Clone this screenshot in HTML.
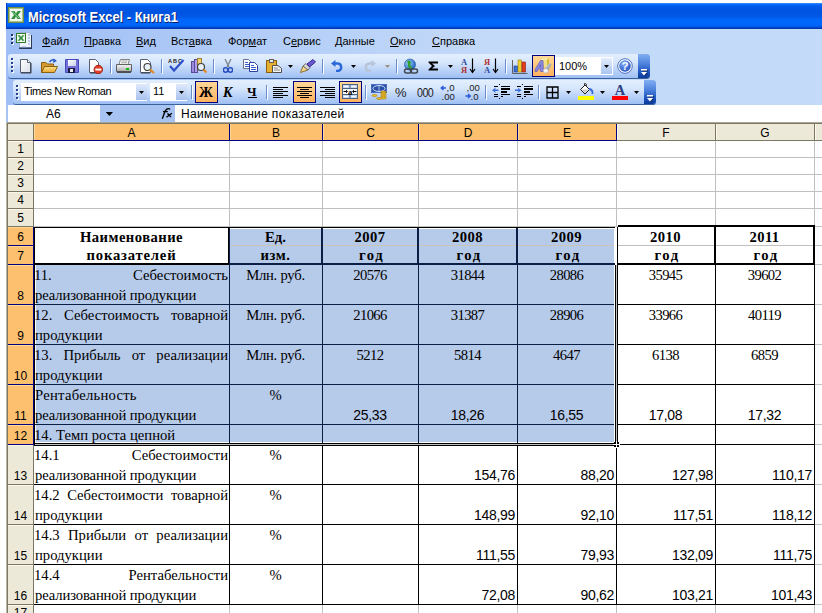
<!DOCTYPE html><html><head><meta charset="utf-8"><style>
html,body{margin:0;padding:0;width:822px;height:613px;overflow:hidden;background:#fff;position:relative}
.a{position:absolute}
.t{position:absolute;white-space:nowrap;line-height:1}
u{text-decoration:underline;text-underline-offset:1px}
.bl{display:inline-block;vertical-align:baseline}
</style></head><body>
<div class="a" style="left:6px;top:3px;width:816px;height:26px;background:linear-gradient(#4a94ff 0px,#1470ff 1px,#0062f2 2.5px,#0058e6 4px,#0054df 9px,#005ae8 14px,#0066fa 16px,#0068ff 22px,#005ae8 23.5px,#0046cc 24.5px,#0032a8 26px);"></div>
<div class="a" style="left:6px;top:3px;width:1px;height:26px;background:#0040c0;"></div>
<svg class="a" style="left:8px;top:7px" width="16" height="16" viewBox="0 0 16 16">
<rect x="0" y="0" width="16" height="16" fill="#6f8f3f"/>
<rect x="1" y="1" width="14" height="14" fill="#a8c488"/>
<rect x="2" y="2" width="12" height="12" fill="#f2f8ee"/>
<path d="M3 4 H6.5 L8 6.5 L9.5 4 H13 L10 8 L13 12 H9.5 L8 9.5 L6.5 12 H3 L6 8 Z" fill="#2f9040"/>
<path d="M4 4.5 L11.5 11.5" stroke="#a8e0a8" stroke-width="0.8"/>
</svg>
<div class="t" style="left:28px;top:9px;font:bold 14px 'Liberation Sans', sans-serif;color:#fff;text-shadow:1px 1px 0 #0a1e6e;transform-origin:0 0;transform:scaleX(0.92);">Microsoft Excel - Книга1</div>
<div class="a" style="left:6px;top:29px;width:816px;height:24px;background:linear-gradient(90deg,#9ebef5 0%,#c4daf9 60%,#c4daf9 100%);"></div>
<div class="a" style="left:12px;top:35px;width:2px;height:2px;background:#fff;"></div>
<div class="a" style="left:11px;top:34px;width:2px;height:2px;background:#1c3270;"></div>
<div class="a" style="left:12px;top:39px;width:2px;height:2px;background:#fff;"></div>
<div class="a" style="left:11px;top:38px;width:2px;height:2px;background:#1c3270;"></div>
<div class="a" style="left:12px;top:43px;width:2px;height:2px;background:#fff;"></div>
<div class="a" style="left:11px;top:42px;width:2px;height:2px;background:#1c3270;"></div>
<svg class="a" style="left:16px;top:32px" width="18" height="18" viewBox="0 0 18 18">
<path d="M3.5 0.5 H13 L15.5 3 V15.5 H3.5 Z" fill="#eef4ff" stroke="#9ab0d8"/>
<path d="M16 3 V17 H3 V15.5 H15 V3 Z" fill="#2a3a5a"/>
<path d="M12 3H14M12 6H14M12 9H14M12 12H14M6 15H10" stroke="#8aa0c8"/>
<rect x="0" y="1" width="10" height="10" fill="#2f7a20"/>
<rect x="1" y="2" width="8" height="8" fill="#f4faf0"/>
<path d="M1.5 3.2 H3.8 L5 5 L6.2 3.2 H8.5 L6.2 6 L8.5 8.8 H6.2 L5 7 L3.8 8.8 H1.5 L3.8 6 Z" fill="#2f9040"/>
</svg>
<div class="t" style="left:42px;top:35px;font:11px 'Liberation Sans', sans-serif;color:#000;"><u>Ф</u>айл</div>
<div class="t" style="left:84px;top:35px;font:11px 'Liberation Sans', sans-serif;color:#000;"><u>П</u>равка</div>
<div class="t" style="left:136px;top:35px;font:11px 'Liberation Sans', sans-serif;color:#000;"><u>В</u>ид</div>
<div class="t" style="left:171px;top:35px;font:11px 'Liberation Sans', sans-serif;color:#000;">Вст<u>а</u>вка</div>
<div class="t" style="left:228px;top:35px;font:11px 'Liberation Sans', sans-serif;color:#000;">Фор<u>м</u>ат</div>
<div class="t" style="left:283px;top:35px;font:11px 'Liberation Sans', sans-serif;color:#000;">С<u>е</u>рвис</div>
<div class="t" style="left:335px;top:35px;font:11px 'Liberation Sans', sans-serif;color:#000;"><u>Д</u>анные</div>
<div class="t" style="left:390px;top:35px;font:11px 'Liberation Sans', sans-serif;color:#000;"><u>О</u>кно</div>
<div class="t" style="left:432px;top:35px;font:11px 'Liberation Sans', sans-serif;color:#000;"><u>С</u>правка</div>
<div class="a" style="left:6px;top:53px;width:816px;height:52px;background:linear-gradient(90deg,#9ebef5 0%,#c4daf9 60%,#c4daf9 100%);"></div>
<div class="a" style="left:8px;top:54px;width:642px;height:24px;background:linear-gradient(#e3effe 0%,#d6e6fc 35%,#bcd4f8 65%,#9ebff4 100%);border-radius:3px;box-shadow:0 1px 0 #3b619c;"></div>
<div class="a" style="left:638px;top:54px;width:12px;height:24px;background:linear-gradient(#82aef0 0%,#4f83de 40%,#1f55c0 75%,#0a3a9a 100%);border-radius:0 3px 3px 0;"></div>
<svg class="a" style="left:641px;top:69px" width="8" height="8" viewBox="0 0 8 8"><rect x="1" y="1" width="6" height="1.5" fill="#000" opacity="0.45"/><path d="M1 4 H7 L4 7.5 Z" fill="#000" opacity="0.4"/><rect x="0" y="0" width="6" height="1.5" fill="#fff"/><path d="M0 3 H6 L3 6.5 Z" fill="#fff"/></svg>
<div class="a" style="left:12px;top:59px;width:2px;height:2px;background:#fff;"></div>
<div class="a" style="left:11px;top:58px;width:2px;height:2px;background:#27418f;"></div>
<div class="a" style="left:12px;top:63px;width:2px;height:2px;background:#fff;"></div>
<div class="a" style="left:11px;top:62px;width:2px;height:2px;background:#27418f;"></div>
<div class="a" style="left:12px;top:67px;width:2px;height:2px;background:#fff;"></div>
<div class="a" style="left:11px;top:66px;width:2px;height:2px;background:#27418f;"></div>
<div class="a" style="left:12px;top:71px;width:2px;height:2px;background:#fff;"></div>
<div class="a" style="left:11px;top:70px;width:2px;height:2px;background:#27418f;"></div>
<svg class="a" style="left:20px;top:59px;" width="12" height="15" viewBox="0 0 12 15"><defs><linearGradient id="gNew" x1="0" y1="0" x2="1" y2="1"><stop offset="0" stop-color="#fff"/><stop offset="1" stop-color="#d8dde8"/></linearGradient></defs><path d="M0.5 0.5H7.5L10.5 3.5V13.5H0.5Z" fill="url(#gNew)" stroke="#5a6070"/><path d="M7.5 0.5V3.5H10.5" fill="#fff" stroke="#5a6070"/><path d="M1 14H11V4" fill="none" stroke="#30384a"/></svg>
<svg class="a" style="left:41px;top:58px;" width="17" height="16" viewBox="0 0 17 16"><defs><linearGradient id="gFo" x1="0" y1="0" x2="0" y2="1"><stop offset="0" stop-color="#fbe08a"/><stop offset="1" stop-color="#e8a830"/></linearGradient></defs><path d="M0.5 4.5H5L6.5 6H12.5V14.5H0.5Z" fill="#d89a30" stroke="#8a6010"/><path d="M3.5 8.5H16.5L13.5 14.5H0.5Z" fill="url(#gFo)" stroke="#8a6010"/><path d="M8.5 4 Q11 0.5 14 2.5" fill="none" stroke="#2a5ac8" stroke-width="1.6"/><path d="M12.5 0.5 L16 3 L12 5Z" fill="#2a5ac8"/></svg>
<svg class="a" style="left:65px;top:59px;" width="14" height="14" viewBox="0 0 14 14"><rect x="0" y="0" width="14" height="14" rx="1" fill="#4848b8"/><rect x="1" y="1" width="12" height="12" fill="#7070d8"/><defs><linearGradient id="gSv" x1="0" y1="0" x2="1" y2="1"><stop offset="0" stop-color="#fff"/><stop offset="1" stop-color="#c8d0e8"/></linearGradient></defs><rect x="3" y="1" width="8" height="6" fill="url(#gSv)"/><rect x="3" y="9" width="7" height="5" fill="#1a1a40"/><rect x="5" y="10" width="3" height="3" fill="#e8e8f0"/></svg>
<svg class="a" style="left:89px;top:59px;" width="14" height="15" viewBox="0 0 14 15"><path d="M0.5 0.5H6.5L9.5 3.5V13.5H0.5Z" fill="#fff" stroke="#5a6070"/><path d="M1 14H8" stroke="#30384a"/><circle cx="9.3" cy="10.5" r="4.2" fill="#e0402a" stroke="#a02010"/><rect x="6.3" y="9.6" width="6" height="1.9" fill="#fff"/></svg>
<div class="a" style="left:110px;top:59px;width:1px;height:14px;background:#6a8ccb;"></div>
<div class="a" style="left:111px;top:60px;width:1px;height:14px;background:#fff;"></div>
<svg class="a" style="left:116px;top:59px;" width="16" height="14" viewBox="0 0 16 14"><defs><linearGradient id="gPr" x1="0" y1="0" x2="0" y2="1"><stop offset="0" stop-color="#f8f8f8"/><stop offset="1" stop-color="#a8a8a8"/></linearGradient></defs><path d="M4.5 0.5H13.5L12 5.5H3Z" fill="#fff" stroke="#808080"/><path d="M5.5 2H11.5M5 3.8H11" stroke="#a0a0a0"/><path d="M0.5 5.5H15.5V12.5H0.5Z" fill="url(#gPr)" stroke="#606060"/><rect x="1" y="12" width="14" height="2" fill="#505050"/><rect x="10" y="9" width="3" height="2" fill="#10c010"/></svg>
<svg class="a" style="left:140px;top:59px;" width="16" height="15" viewBox="0 0 16 15"><path d="M0.5 0.5H7.5L10.5 3.5V13.5H0.5Z" fill="#fff" stroke="#5a6070"/><path d="M1 14H10" stroke="#30384a"/><circle cx="7.5" cy="8" r="3.5" fill="#e8f0f8" stroke="#404040" stroke-width="1.2"/><path d="M10 10.5 L14 14" stroke="#e08a20" stroke-width="2.2"/></svg>
<div class="a" style="left:161px;top:59px;width:1px;height:14px;background:#6a8ccb;"></div>
<div class="a" style="left:162px;top:60px;width:1px;height:14px;background:#fff;"></div>
<svg class="a" style="left:168px;top:58px;" width="17" height="15" viewBox="0 0 17 15"><text x="0" y="5" font-family="'Liberation Sans', sans-serif" font-size="5.5" font-weight="bold" fill="#202020" textLength="14">ABC</text><path d="M2 8 L6 12.5 L15.5 2" fill="none" stroke="#3050c8" stroke-width="2.2"/></svg>
<svg class="a" style="left:191px;top:58px;" width="16" height="16" viewBox="0 0 16 16"><rect x="0.5" y="3.5" width="3" height="11" fill="#9a8ae0" stroke="#5a4a9a"/><rect x="3.5" y="1.5" width="3" height="13" fill="#b0a0f0" stroke="#5a4a9a"/><rect x="6.5" y="0.5" width="4" height="11" fill="#f0d070" stroke="#a08030"/><circle cx="10" cy="9" r="3.5" fill="#e8f0f8" stroke="#404040" stroke-width="1.2"/><path d="M12.5 11.5 L15.5 14.5" stroke="#e08a20" stroke-width="2.2"/></svg>
<div class="a" style="left:213px;top:59px;width:1px;height:14px;background:#6a8ccb;"></div>
<div class="a" style="left:214px;top:60px;width:1px;height:14px;background:#fff;"></div>
<svg class="a" style="left:223px;top:59px;" width="10" height="14" viewBox="0 0 10 14"><path d="M2 0 L6 8 M8 0 L4 8" stroke="#808890" stroke-width="1.4"/><circle cx="2.6" cy="11" r="2.2" fill="none" stroke="#2a50c0" stroke-width="1.5"/><circle cx="7.4" cy="11" r="2.2" fill="none" stroke="#2a50c0" stroke-width="1.5"/></svg>
<svg class="a" style="left:243px;top:59px;" width="16" height="13" viewBox="0 0 16 13"><path d="M0.5 0.5H5.5L7.5 2.5V9.5H0.5Z" fill="#fff" stroke="#6a7090"/><g fill="#3a5ad0"><rect x="2" y="3" width="3" height="1"/><rect x="2" y="5" width="4" height="1"/><rect x="2" y="7" width="4" height="1"/></g><path d="M6.5 3.5H11.5L14.5 6.5V12.5H6.5Z" fill="#fff" stroke="#2a40a0"/><g fill="#3a5ad0"><rect x="8" y="6" width="3" height="1"/><rect x="8" y="8" width="5" height="1"/><rect x="8" y="10" width="5" height="1"/></g></svg>
<svg class="a" style="left:266px;top:59px;" width="16" height="14" viewBox="0 0 16 14"><rect x="0.5" y="1.5" width="10" height="12" fill="#e8b030" stroke="#8a6010"/><rect x="3.5" y="0.5" width="4" height="3" fill="#e8e8e8" stroke="#606060"/><path d="M6.5 6.5H12L15.5 9.5V13.5H6.5Z" fill="#f4f4f4" stroke="#505050"/><path d="M8 9H12M8 11H14" stroke="#8a8a8a"/></svg>
<svg class="a" style="left:288px;top:65px" width="5" height="3" viewBox="0 0 5 3"><path d="M0 0H5L2.5 3Z" fill="#000"/></svg>
<svg class="a" style="left:300px;top:59px;" width="16" height="14" viewBox="0 0 16 14"><path d="M0.5 13.5 L3 7 L8 11 Z" fill="#f0d888" stroke="#907030"/><path d="M3 7 L6 4.5 L10 8.5 L8 11Z" fill="#d8d8d8" stroke="#707070"/><path d="M7 5 L13 0.5 L15.5 3 L9.5 8Z" fill="#6a5ad0" stroke="#3a2a90"/></svg>
<div class="a" style="left:322px;top:59px;width:1px;height:14px;background:#6a8ccb;"></div>
<div class="a" style="left:323px;top:60px;width:1px;height:14px;background:#fff;"></div>
<svg class="a" style="left:331px;top:60px;" width="12" height="12" viewBox="0 0 12 12"><path d="M3 3.5 H7 A3.8 3.8 0 0 1 7 11 H5" fill="none" stroke="#2a68d8" stroke-width="2.4"/><path d="M0 3.5 L4.5 0 L4.5 7Z" fill="#2a68d8"/></svg>
<svg class="a" style="left:351px;top:65px" width="5" height="3" viewBox="0 0 5 3"><path d="M0 0H5L2.5 3Z" fill="#000"/></svg>
<svg class="a" style="left:364px;top:60px;" width="12" height="12" viewBox="0 0 12 12"><path d="M9 3.5 H5 A3.8 3.8 0 0 0 5 11 H7" fill="none" stroke="#b8c4d8" stroke-width="2.4"/><path d="M12 3.5 L7.5 0 L7.5 7Z" fill="#b8c4d8"/></svg>
<svg class="a" style="left:385px;top:65px" width="5" height="3" viewBox="0 0 5 3"><path d="M0 0H5L2.5 3Z" fill="#9a9080"/></svg>
<div class="a" style="left:396px;top:59px;width:1px;height:14px;background:#6a8ccb;"></div>
<div class="a" style="left:397px;top:60px;width:1px;height:14px;background:#fff;"></div>
<svg class="a" style="left:403px;top:58px;" width="16" height="16" viewBox="0 0 16 16"><defs><radialGradient id="gGl" cx="0.35" cy="0.35" r="0.7"><stop offset="0" stop-color="#a0d0ff"/><stop offset="1" stop-color="#2060c0"/></radialGradient></defs><circle cx="7" cy="6.5" r="5.5" fill="url(#gGl)" stroke="#1a4a98" stroke-width="0.6"/><path d="M4 3 Q7 1.5 8 4.5 Q6 7.5 9.5 9 L7 11 Q4 8 5 6Z" fill="#30a030"/><rect x="1.5" y="11" width="7" height="4" rx="2" fill="none" stroke="#404850" stroke-width="1.5"/><rect x="7.5" y="11" width="7" height="4" rx="2" fill="none" stroke="#404850" stroke-width="1.5"/></svg>
<svg class="a" style="left:428px;top:61px;" width="11" height="10" viewBox="0 0 11 10"><path d="M0.5 0.5 H10 V2.5 H4 L7 5 L4 7.5 H10 V9.5 H0.5 V8.5 L4 5 L0.5 1.5Z" fill="#000"/></svg>
<svg class="a" style="left:448px;top:65px" width="5" height="3" viewBox="0 0 5 3"><path d="M0 0H5L2.5 3Z" fill="#000"/></svg>
<svg class="a" style="left:461px;top:58px;" width="15" height="16" viewBox="0 0 15 16"><text x="0" y="7" font-family="'Liberation Serif', serif" font-size="8.5" font-weight="bold" fill="#3050a0">A</text><text x="0" y="15" font-family="'Liberation Serif', serif" font-size="8.5" font-weight="bold" fill="#b03030">Я</text><path d="M11.5 0.5 V14" stroke="#000" stroke-width="1.2"/><path d="M9 11 L11.5 14.5 L14 11" fill="none" stroke="#000" stroke-width="1.2"/></svg>
<svg class="a" style="left:484px;top:58px;" width="15" height="16" viewBox="0 0 15 16"><text x="0" y="7" font-family="'Liberation Serif', serif" font-size="8.5" font-weight="bold" fill="#b03030">Я</text><text x="0" y="15" font-family="'Liberation Serif', serif" font-size="8.5" font-weight="bold" fill="#3050a0">A</text><path d="M11.5 0.5 V14" stroke="#000" stroke-width="1.2"/><path d="M9 11 L11.5 14.5 L14 11" fill="none" stroke="#000" stroke-width="1.2"/></svg>
<div class="a" style="left:505px;top:59px;width:1px;height:14px;background:#6a8ccb;"></div>
<div class="a" style="left:506px;top:60px;width:1px;height:14px;background:#fff;"></div>
<svg class="a" style="left:512px;top:58px;" width="16" height="16" viewBox="0 0 16 16"><path d="M0.5 2 V15.5 H15.5" fill="none" stroke="#606060"/><rect x="2" y="8" width="3.5" height="6" fill="#3a70d8" stroke="#1a3a90" stroke-width="0.6"/><rect x="6" y="2" width="3.5" height="12" fill="#f0d030" stroke="#a08010" stroke-width="0.6"/><rect x="10" y="4" width="3.5" height="10" fill="#e04020" stroke="#901a10" stroke-width="0.6"/></svg>
<div class="a" style="left:532px;top:55px;width:23px;height:22px;background:linear-gradient(#ffd898,#ffb25e);border:1px solid #000080;box-sizing:border-box;"></div>
<svg class="a" style="left:530px;top:54px;" width="28" height="24" viewBox="0 0 28 24"><defs><linearGradient id="gCy" x1="0" y1="0" x2="1" y2="1"><stop offset="0" stop-color="#e8eef4"/><stop offset="1" stop-color="#6a7a8a"/></linearGradient></defs><path d="M10 6 L12 4 H19 V11 L17 13 H10Z" fill="#d8b830"/><path d="M10 6 L12 4 H19 L17 6Z" fill="#f4e8a0"/><rect x="10" y="6" width="7" height="7" fill="#f0e088"/><path d="M5 15.5 L10.5 6.5 L13 6.5 L13.5 17.5 L10.5 17.5 L10.5 15 L8.5 15 L7.3 17.5 L5 17.5Z" fill="#8a86e0" stroke="#5a56b0" stroke-width="0.6"/><path d="M9.2 12.8 L10.8 10 L10.8 12.8Z" fill="#5a56b0"/><path d="M14.5 16 L18.5 9.5 Q20.5 8.5 21.5 10.5 L17.5 17.5Z" fill="url(#gCy)"/><ellipse cx="15.8" cy="16.8" rx="2.6" ry="2.3" fill="#f4f6f8" stroke="#8a9aaa" stroke-width="0.5"/></svg>
<div class="a" style="left:555px;top:57px;width:58px;height:18px;background:#fff;"></div>
<div class="a" style="left:601px;top:58px;width:11px;height:16px;background:linear-gradient(#e4eefc,#a8c4f0);"></div>
<svg class="a" style="left:604px;top:65px" width="5" height="3" viewBox="0 0 5 3"><path d="M0 0H5L2.5 3Z" fill="#000"/></svg>
<div class="t" style="left:559px;top:60px;font:11px 'Liberation Sans', sans-serif;color:#000;">100%</div>
<svg class="a" style="left:617px;top:58px;" width="16" height="16" viewBox="0 0 16 16"><defs><radialGradient id="gHp" cx="0.4" cy="0.3" r="0.8"><stop offset="0" stop-color="#80b0ff"/><stop offset="1" stop-color="#1a48b8"/></radialGradient></defs><circle cx="8" cy="8" r="7.3" fill="#fff" stroke="#2a50b0" stroke-width="0.8"/><circle cx="8" cy="8" r="5.8" fill="url(#gHp)"/><text x="8" y="12.3" text-anchor="middle" font-family="'Liberation Sans', sans-serif" font-size="11.5" font-weight="bold" fill="#fff">?</text></svg>
<div class="a" style="left:13px;top:80px;width:643px;height:24px;background:linear-gradient(#e3effe 0%,#d6e6fc 35%,#bcd4f8 65%,#9ebff4 100%);border-radius:3px;box-shadow:0 1px 0 #3b619c;"></div>
<div class="a" style="left:644px;top:80px;width:12px;height:24px;background:linear-gradient(#82aef0 0%,#4f83de 40%,#1f55c0 75%,#0a3a9a 100%);border-radius:0 3px 3px 0;"></div>
<svg class="a" style="left:647px;top:95px" width="8" height="8" viewBox="0 0 8 8"><rect x="1" y="1" width="6" height="1.5" fill="#000" opacity="0.45"/><path d="M1 4 H7 L4 7.5 Z" fill="#000" opacity="0.4"/><rect x="0" y="0" width="6" height="1.5" fill="#fff"/><path d="M0 3 H6 L3 6.5 Z" fill="#fff"/></svg>
<div class="a" style="left:17px;top:86px;width:2px;height:2px;background:#fff;"></div>
<div class="a" style="left:16px;top:85px;width:2px;height:2px;background:#27418f;"></div>
<div class="a" style="left:17px;top:90px;width:2px;height:2px;background:#fff;"></div>
<div class="a" style="left:16px;top:89px;width:2px;height:2px;background:#27418f;"></div>
<div class="a" style="left:17px;top:94px;width:2px;height:2px;background:#fff;"></div>
<div class="a" style="left:16px;top:93px;width:2px;height:2px;background:#27418f;"></div>
<div class="a" style="left:17px;top:98px;width:2px;height:2px;background:#fff;"></div>
<div class="a" style="left:16px;top:97px;width:2px;height:2px;background:#27418f;"></div>
<div class="a" style="left:21px;top:83px;width:126px;height:18px;background:#fff;"></div>
<div class="a" style="left:136px;top:84px;width:11px;height:16px;background:linear-gradient(#dfe9fb,#a8c2ee);"></div>
<svg class="a" style="left:139px;top:91px" width="5" height="3" viewBox="0 0 5 3"><path d="M0 0H5L2.5 3Z" fill="#000"/></svg>
<div class="t" style="left:24px;top:85px;font:11px 'Liberation Sans', sans-serif;color:#000;letter-spacing:-0.4px;">Times New Roman</div>
<div class="a" style="left:150px;top:83px;width:37px;height:18px;background:#fff;"></div>
<div class="a" style="left:176px;top:84px;width:11px;height:16px;background:linear-gradient(#dfe9fb,#a8c2ee);"></div>
<svg class="a" style="left:179px;top:91px" width="5" height="3" viewBox="0 0 5 3"><path d="M0 0H5L2.5 3Z" fill="#000"/></svg>
<div class="t" style="left:153px;top:85px;font:11px 'Liberation Sans', sans-serif;color:#000;">11</div>
<div class="a" style="left:191px;top:85px;width:1px;height:14px;background:#6a8ccb;"></div>
<div class="a" style="left:192px;top:86px;width:1px;height:14px;background:#fff;"></div>
<div class="a" style="left:195px;top:81px;width:23px;height:22px;background:linear-gradient(#ffd898,#ffb25e);border:1px solid #000080;box-sizing:border-box;"></div>
<div class="t" style="left:199px;top:85px;font:bold 14px 'Liberation Serif', serif;color:#000;">Ж</div>
<div class="t" style="left:223px;top:85px;font:bold italic 14px 'Liberation Serif', serif;color:#000;">К</div>
<div class="t" style="left:247px;top:84px;font:bold 13px 'Liberation Serif', serif;color:#000;">Ч</div>
<div class="a" style="left:248px;top:97px;width:9px;height:1px;background:#000;"></div>
<div class="a" style="left:266px;top:85px;width:1px;height:14px;background:#6a8ccb;"></div>
<div class="a" style="left:267px;top:86px;width:1px;height:14px;background:#fff;"></div>
<svg class="a" style="left:273px;top:87px;" width="15" height="12" viewBox="0 0 15 12"><rect x="0" y="0" width="15" height="1" fill="#000"/><rect x="0" y="2" width="10" height="1" fill="#000"/><rect x="0" y="4" width="15" height="1" fill="#000"/><rect x="0" y="6" width="10" height="1" fill="#000"/><rect x="0" y="8" width="15" height="1" fill="#000"/><rect x="0" y="10" width="10" height="1" fill="#000"/></svg>
<div class="a" style="left:293px;top:81px;width:23px;height:22px;background:linear-gradient(#ffd898,#ffb25e);border:1px solid #000080;box-sizing:border-box;"></div>
<svg class="a" style="left:297px;top:87px;" width="15" height="12" viewBox="0 0 15 12"><rect x="0" y="0" width="15" height="1" fill="#000"/><rect x="3" y="2" width="9" height="1" fill="#000"/><rect x="0" y="4" width="15" height="1" fill="#000"/><rect x="3" y="6" width="9" height="1" fill="#000"/><rect x="0" y="8" width="15" height="1" fill="#000"/><rect x="3" y="10" width="9" height="1" fill="#000"/></svg>
<svg class="a" style="left:320px;top:87px;" width="15" height="12" viewBox="0 0 15 12"><rect x="0" y="0" width="15" height="1" fill="#000"/><rect x="5" y="2" width="10" height="1" fill="#000"/><rect x="0" y="4" width="15" height="1" fill="#000"/><rect x="5" y="6" width="10" height="1" fill="#000"/><rect x="0" y="8" width="15" height="1" fill="#000"/><rect x="5" y="10" width="10" height="1" fill="#000"/></svg>
<div class="a" style="left:339px;top:81px;width:23px;height:22px;background:linear-gradient(#ffd898,#ffb25e);border:1px solid #000080;box-sizing:border-box;"></div>
<svg class="a" style="left:342px;top:84px;" width="16" height="15" viewBox="0 0 16 15"><rect x="0" y="0" width="16" height="15" fill="#4a6080"/><rect x="1" y="1" width="6.5" height="3" fill="#c8d8f0"/><rect x="8.5" y="1" width="6.5" height="3" fill="#c8d8f0"/><rect x="1" y="11" width="6.5" height="3" fill="#c8d8f0"/><rect x="8.5" y="11" width="6.5" height="3" fill="#c8d8f0"/><rect x="1" y="5" width="14" height="5" fill="#f4f4f4"/><rect x="2" y="2" width="4" height="1" fill="#fff"/><rect x="9.5" y="2" width="4" height="1" fill="#fff"/><rect x="2" y="12" width="4" height="1" fill="#fff"/><rect x="9.5" y="12" width="4" height="1" fill="#fff"/><text x="8" y="10.5" text-anchor="middle" font-family="'Liberation Serif', serif" font-size="8.5" font-weight="bold" fill="#000">a</text><path d="M1.5 7.5H5M11 7.5H14.5" stroke="#000"/><path d="M4 6L5.5 7.5L4 9M12 6L10.5 7.5L12 9" fill="none" stroke="#000" stroke-width="0.8"/></svg>
<div class="a" style="left:365px;top:85px;width:1px;height:14px;background:#6a8ccb;"></div>
<div class="a" style="left:366px;top:86px;width:1px;height:14px;background:#fff;"></div>
<svg class="a" style="left:371px;top:84px;" width="16" height="16" viewBox="0 0 16 16"><rect x="0" y="0" width="16" height="9" fill="#2a50a8"/><rect x="0.5" y="0.5" width="15" height="8" fill="none" stroke="#5a80d0" stroke-width="0.6"/><ellipse cx="8" cy="4.5" rx="6" ry="3" fill="none" stroke="#e0ecff" stroke-width="0.9"/><path d="M8 1.5V7.5" stroke="#c0d4f0" stroke-width="0.8"/><g fill="#f0c020" stroke="#a07000" stroke-width="0.5"><ellipse cx="12.5" cy="8" rx="3" ry="1.1"/><ellipse cx="12.5" cy="10" rx="3" ry="1.1"/><ellipse cx="12.5" cy="12" rx="3" ry="1.1"/><ellipse cx="12.5" cy="14" rx="3" ry="1.1"/><ellipse cx="3.5" cy="11.5" rx="2.6" ry="1"/><ellipse cx="8" cy="14.5" rx="2.6" ry="1"/></g></svg>
<div class="t" style="left:395px;top:85px;font:13px 'Liberation Sans', sans-serif;color:#202020;">%</div>
<div class="t" style="left:417px;top:85px;font:13px 'Liberation Sans', sans-serif;color:#202020;letter-spacing:-0.6px;transform-origin:0 0;transform:scaleX(0.82);">000</div>
<svg class="a" style="left:440px;top:84px;" width="16" height="16" viewBox="0 0 16 16"><path d="M6 4 H1.5 M3.5 2 L1.2 4 L3.5 6" fill="none" stroke="#2a5ad8" stroke-width="1.4"/><text x="6.5" y="6.5" font-family="'Liberation Sans', sans-serif" font-size="9.5" fill="#202020">,0</text><text x="1.5" y="15.5" font-family="'Liberation Sans', sans-serif" font-size="9.5" fill="#202020">,00</text></svg>
<svg class="a" style="left:464px;top:84px;" width="16" height="16" viewBox="0 0 16 16"><text x="2.5" y="7" font-family="'Liberation Sans', sans-serif" font-size="9.5" fill="#202020">,00</text><path d="M1.5 12 H6 M4 10 L6.3 12 L4 14" fill="none" stroke="#2a5ad8" stroke-width="1.4"/><text x="6.5" y="15.5" font-family="'Liberation Sans', sans-serif" font-size="9.5" fill="#202020">,0</text></svg>
<div class="a" style="left:485px;top:85px;width:1px;height:14px;background:#6a8ccb;"></div>
<div class="a" style="left:486px;top:86px;width:1px;height:14px;background:#fff;"></div>
<svg class="a" style="left:492px;top:84px;" width="18" height="15" viewBox="0 0 18 15"><g fill="#000"><rect x="2" y="2" width="4" height="1"/><rect x="9" y="2" width="9" height="1"/><rect x="9" y="4" width="9" height="2"/><rect x="9" y="7" width="6" height="2"/><rect x="2" y="10" width="4" height="1"/><rect x="9" y="10" width="9" height="1"/><rect x="2" y="12" width="4" height="1"/><rect x="9" y="12" width="2" height="1"/><rect x="7" y="0" width="1" height="1"/><rect x="7" y="14" width="1" height="1"/></g><path d="M6.5 5.5 H3 L4 3.5 L0 6.3 L4 9 L3 7 H6.5Z" fill="#3a6ae0"/></svg>
<svg class="a" style="left:515px;top:84px;" width="18" height="15" viewBox="0 0 18 15"><g fill="#000"><rect x="2" y="2" width="4" height="1"/><rect x="9" y="2" width="9" height="1"/><rect x="9" y="4" width="9" height="2"/><rect x="9" y="7" width="6" height="2"/><rect x="2" y="10" width="4" height="1"/><rect x="9" y="10" width="9" height="1"/><rect x="2" y="12" width="4" height="1"/><rect x="9" y="12" width="2" height="1"/><rect x="7" y="0" width="1" height="1"/><rect x="7" y="14" width="1" height="1"/></g><path d="M0 5.5 H3.5 L2.5 3.5 L6.5 6.3 L2.5 9 L3.5 7 H0Z" fill="#3a6ae0"/></svg>
<div class="a" style="left:538px;top:85px;width:1px;height:14px;background:#6a8ccb;"></div>
<div class="a" style="left:539px;top:86px;width:1px;height:14px;background:#fff;"></div>
<svg class="a" style="left:546px;top:86px;" width="13" height="13" viewBox="0 0 13 13"><path d="M1 1H12V12H1Z M6.5 1V12 M1 6.5H12" fill="none" stroke="#000" stroke-width="1.3"/></svg>
<svg class="a" style="left:566px;top:91px" width="5" height="3" viewBox="0 0 5 3"><path d="M0 0H5L2.5 3Z" fill="#000"/></svg>
<svg class="a" style="left:577px;top:83px;" width="18" height="17" viewBox="0 0 18 17"><path d="M3.5 6.5 L8 2 L12.5 6.5 L8 11Z" fill="#fff" stroke="#202020"/><path d="M4.5 6.5 H11.5 L8 10Z" fill="#c8c8c8"/><path d="M7.5 2.5 V0.5 M7.5 0.5 Q10 0 9.5 4" fill="none" stroke="#303030"/><path d="M12 6 Q16 6.5 15.5 11" fill="none" stroke="#3a6ae0" stroke-width="1.8"/><rect x="1" y="13" width="16" height="4" fill="#ffff00"/></svg>
<svg class="a" style="left:600px;top:91px" width="5" height="3" viewBox="0 0 5 3"><path d="M0 0H5L2.5 3Z" fill="#000"/></svg>
<svg class="a" style="left:611px;top:83px;" width="18" height="17" viewBox="0 0 18 17"><text x="9" y="11.5" text-anchor="middle" font-family="'Liberation Serif', serif" font-size="14.5" font-weight="bold" fill="#2a3e80">A</text><rect x="1" y="13" width="16" height="4" fill="#ff0000"/></svg>
<svg class="a" style="left:634px;top:91px" width="5" height="3" viewBox="0 0 5 3"><path d="M0 0H5L2.5 3Z" fill="#000"/></svg>
<div class="a" style="left:6px;top:105px;width:816px;height:17px;background:#a6c3f2;"></div>
<div class="a" style="left:8px;top:105px;width:92px;height:17px;background:#fff;"></div>
<div class="t" style="left:46px;top:107px;font:12px 'Liberation Sans', sans-serif;color:#000;">А6</div>
<svg class="a" style="left:106px;top:112px" width="5" height="3" viewBox="0 0 5 3"><path d="M0 0H5L2.5 3Z" fill="#000"/></svg>
<svg class="a" style="left:106px;top:112px" width="7" height="4" viewBox="0 0 7 4"><path d="M0 0H7L3.5 4Z" fill="#000"/></svg>
<svg class="a" style="left:158px;top:104px;" width="22" height="18" viewBox="0 0 22 18"><path d="M4.3 14.8 L6.8 8 Q8 4.6 10.5 4.6 Q11.5 4.6 12 5.5" fill="none" stroke="#000" stroke-width="1.4"/><path d="M5 7.6 H9.8" stroke="#000" stroke-width="1.3"/><path d="M9.5 9.5 L12.5 12.5 M13.8 9.3 L9.2 12.8" stroke="#000" stroke-width="1.4"/><path d="M8.2 12.8 H10 M12 12.8 H13.2" stroke="#000" stroke-width="1.1"/></svg>
<div class="a" style="left:175px;top:105px;width:647px;height:17px;background:#fff;"></div>
<div class="t" style="left:181px;top:107px;font:12px 'Liberation Sans', sans-serif;color:#000;letter-spacing:0.33px;">Наименование показателей</div>
<div class="a" style="left:6px;top:122px;width:816px;height:491px;background:#fff;"></div>
<div class="a" style="left:6px;top:122px;width:816px;height:1px;background:#aaa695;"></div>
<div class="a" style="left:6px;top:122px;width:1px;height:491px;background:#bcb8a4;"></div>
<div class="a" style="left:7px;top:123px;width:815px;height:1px;background:#7a7865;"></div>
<div class="a" style="left:7px;top:123px;width:1px;height:490px;background:#7a7865;"></div>
<div class="a" style="left:8px;top:124px;width:25px;height:16px;background:#ece9d8;"></div>
<div class="a" style="left:33px;top:124px;width:1px;height:17px;background:#7a7865;"></div>
<div class="a" style="left:8px;top:140px;width:26px;height:1px;background:#7a7865;"></div>
<div class="a" style="left:34px;top:124px;width:195px;height:16px;background:#fcc06f;"></div>
<div class="a" style="left:34px;top:124px;width:1px;height:16px;background:#ffd896;"></div>
<div class="a" style="left:229px;top:124px;width:1px;height:16px;background:#000080;"></div>
<div class="a" style="left:34px;top:140px;width:196px;height:1px;background:#000080;"></div>
<div class="t" style="left:34px;top:126px;width:195px;text-align:center;font:12px 'Liberation Sans', sans-serif;color:#000">A</div>
<div class="a" style="left:230px;top:124px;width:92px;height:16px;background:#fcc06f;"></div>
<div class="a" style="left:230px;top:124px;width:1px;height:16px;background:#ffd896;"></div>
<div class="a" style="left:322px;top:124px;width:1px;height:16px;background:#000080;"></div>
<div class="a" style="left:230px;top:140px;width:93px;height:1px;background:#000080;"></div>
<div class="t" style="left:230px;top:126px;width:92px;text-align:center;font:12px 'Liberation Sans', sans-serif;color:#000">B</div>
<div class="a" style="left:323px;top:124px;width:95px;height:16px;background:#fcc06f;"></div>
<div class="a" style="left:323px;top:124px;width:1px;height:16px;background:#ffd896;"></div>
<div class="a" style="left:418px;top:124px;width:1px;height:16px;background:#000080;"></div>
<div class="a" style="left:323px;top:140px;width:96px;height:1px;background:#000080;"></div>
<div class="t" style="left:323px;top:126px;width:95px;text-align:center;font:12px 'Liberation Sans', sans-serif;color:#000">C</div>
<div class="a" style="left:419px;top:124px;width:98px;height:16px;background:#fcc06f;"></div>
<div class="a" style="left:419px;top:124px;width:1px;height:16px;background:#ffd896;"></div>
<div class="a" style="left:517px;top:124px;width:1px;height:16px;background:#000080;"></div>
<div class="a" style="left:419px;top:140px;width:99px;height:1px;background:#000080;"></div>
<div class="t" style="left:419px;top:126px;width:98px;text-align:center;font:12px 'Liberation Sans', sans-serif;color:#000">D</div>
<div class="a" style="left:518px;top:124px;width:98px;height:16px;background:#fcc06f;"></div>
<div class="a" style="left:518px;top:124px;width:1px;height:16px;background:#ffd896;"></div>
<div class="a" style="left:616px;top:124px;width:1px;height:16px;background:#000080;"></div>
<div class="a" style="left:518px;top:140px;width:99px;height:1px;background:#000080;"></div>
<div class="t" style="left:518px;top:126px;width:98px;text-align:center;font:12px 'Liberation Sans', sans-serif;color:#000">E</div>
<div class="a" style="left:617px;top:124px;width:98px;height:16px;background:#ece9d8;"></div>
<div class="a" style="left:617px;top:124px;width:1px;height:16px;background:#fff8e8;"></div>
<div class="a" style="left:715px;top:124px;width:1px;height:16px;background:#7a7865;"></div>
<div class="a" style="left:617px;top:140px;width:99px;height:1px;background:#7a7865;"></div>
<div class="t" style="left:617px;top:126px;width:98px;text-align:center;font:12px 'Liberation Sans', sans-serif;color:#000">F</div>
<div class="a" style="left:716px;top:124px;width:98px;height:16px;background:#ece9d8;"></div>
<div class="a" style="left:716px;top:124px;width:1px;height:16px;background:#fff8e8;"></div>
<div class="a" style="left:814px;top:124px;width:1px;height:16px;background:#7a7865;"></div>
<div class="a" style="left:716px;top:140px;width:99px;height:1px;background:#7a7865;"></div>
<div class="t" style="left:716px;top:126px;width:98px;text-align:center;font:12px 'Liberation Sans', sans-serif;color:#000">G</div>
<div class="a" style="left:815px;top:124px;width:7px;height:16px;background:#ece9d8;"></div>
<div class="a" style="left:815px;top:124px;width:1px;height:16px;background:#fff8e8;"></div>
<div class="a" style="left:815px;top:140px;width:8px;height:1px;background:#7a7865;"></div>
<div class="a" style="left:33px;top:140px;width:1px;height:1px;background:#000080;"></div>
<div class="a" style="left:8px;top:141px;width:25px;height:16px;background:#ece9d8;"></div>
<div class="a" style="left:8px;top:141px;width:25px;height:1px;background:#fff8e8;"></div>
<div class="a" style="left:33px;top:141px;width:1px;height:17px;background:#7a7865;"></div>
<div class="a" style="left:8px;top:157px;width:26px;height:1px;background:#7a7865;"></div>
<div class="t" style="left:8px;top:142px;width:25px;text-align:center;font:12px 'Liberation Sans', sans-serif;color:#000">1</div>
<div class="a" style="left:8px;top:158px;width:25px;height:16px;background:#ece9d8;"></div>
<div class="a" style="left:8px;top:158px;width:25px;height:1px;background:#fff8e8;"></div>
<div class="a" style="left:33px;top:158px;width:1px;height:17px;background:#7a7865;"></div>
<div class="a" style="left:8px;top:174px;width:26px;height:1px;background:#7a7865;"></div>
<div class="t" style="left:8px;top:159px;width:25px;text-align:center;font:12px 'Liberation Sans', sans-serif;color:#000">2</div>
<div class="a" style="left:8px;top:175px;width:25px;height:16px;background:#ece9d8;"></div>
<div class="a" style="left:8px;top:175px;width:25px;height:1px;background:#fff8e8;"></div>
<div class="a" style="left:33px;top:175px;width:1px;height:17px;background:#7a7865;"></div>
<div class="a" style="left:8px;top:191px;width:26px;height:1px;background:#7a7865;"></div>
<div class="t" style="left:8px;top:176px;width:25px;text-align:center;font:12px 'Liberation Sans', sans-serif;color:#000">3</div>
<div class="a" style="left:8px;top:192px;width:25px;height:16px;background:#ece9d8;"></div>
<div class="a" style="left:8px;top:192px;width:25px;height:1px;background:#fff8e8;"></div>
<div class="a" style="left:33px;top:192px;width:1px;height:17px;background:#7a7865;"></div>
<div class="a" style="left:8px;top:208px;width:26px;height:1px;background:#7a7865;"></div>
<div class="t" style="left:8px;top:193px;width:25px;text-align:center;font:12px 'Liberation Sans', sans-serif;color:#000">4</div>
<div class="a" style="left:8px;top:209px;width:25px;height:17px;background:#ece9d8;"></div>
<div class="a" style="left:8px;top:209px;width:25px;height:1px;background:#fff8e8;"></div>
<div class="a" style="left:33px;top:209px;width:1px;height:18px;background:#7a7865;"></div>
<div class="a" style="left:8px;top:226px;width:26px;height:1px;background:#7a7865;"></div>
<div class="t" style="left:8px;top:211px;width:25px;text-align:center;font:12px 'Liberation Sans', sans-serif;color:#000">5</div>
<div class="a" style="left:8px;top:227px;width:25px;height:18px;background:#fcc06f;"></div>
<div class="a" style="left:8px;top:227px;width:25px;height:1px;background:#ffd896;"></div>
<div class="a" style="left:33px;top:227px;width:1px;height:19px;background:#000080;"></div>
<div class="a" style="left:8px;top:245px;width:26px;height:1px;background:#000080;"></div>
<div class="t" style="left:8px;top:230px;width:25px;text-align:center;font:12px 'Liberation Sans', sans-serif;color:#000">6</div>
<div class="a" style="left:8px;top:246px;width:25px;height:18px;background:#fcc06f;"></div>
<div class="a" style="left:8px;top:246px;width:25px;height:1px;background:#ffd896;"></div>
<div class="a" style="left:33px;top:246px;width:1px;height:19px;background:#000080;"></div>
<div class="a" style="left:8px;top:264px;width:26px;height:1px;background:#000080;"></div>
<div class="t" style="left:8px;top:249px;width:25px;text-align:center;font:12px 'Liberation Sans', sans-serif;color:#000">7</div>
<div class="a" style="left:8px;top:265px;width:25px;height:39px;background:#fcc06f;"></div>
<div class="a" style="left:8px;top:265px;width:25px;height:1px;background:#ffd896;"></div>
<div class="a" style="left:33px;top:265px;width:1px;height:40px;background:#000080;"></div>
<div class="a" style="left:8px;top:304px;width:26px;height:1px;background:#000080;"></div>
<div class="t" style="left:8px;top:289px;width:25px;text-align:center;font:12px 'Liberation Sans', sans-serif;color:#000">8</div>
<div class="a" style="left:8px;top:305px;width:25px;height:39px;background:#fcc06f;"></div>
<div class="a" style="left:8px;top:305px;width:25px;height:1px;background:#ffd896;"></div>
<div class="a" style="left:33px;top:305px;width:1px;height:40px;background:#000080;"></div>
<div class="a" style="left:8px;top:344px;width:26px;height:1px;background:#000080;"></div>
<div class="t" style="left:8px;top:329px;width:25px;text-align:center;font:12px 'Liberation Sans', sans-serif;color:#000">9</div>
<div class="a" style="left:8px;top:345px;width:25px;height:39px;background:#fcc06f;"></div>
<div class="a" style="left:8px;top:345px;width:25px;height:1px;background:#ffd896;"></div>
<div class="a" style="left:33px;top:345px;width:1px;height:40px;background:#000080;"></div>
<div class="a" style="left:8px;top:384px;width:26px;height:1px;background:#000080;"></div>
<div class="t" style="left:8px;top:369px;width:25px;text-align:center;font:12px 'Liberation Sans', sans-serif;color:#000">10</div>
<div class="a" style="left:8px;top:385px;width:25px;height:39px;background:#fcc06f;"></div>
<div class="a" style="left:8px;top:385px;width:25px;height:1px;background:#ffd896;"></div>
<div class="a" style="left:33px;top:385px;width:1px;height:40px;background:#000080;"></div>
<div class="a" style="left:8px;top:424px;width:26px;height:1px;background:#000080;"></div>
<div class="t" style="left:8px;top:409px;width:25px;text-align:center;font:12px 'Liberation Sans', sans-serif;color:#000">11</div>
<div class="a" style="left:8px;top:425px;width:25px;height:19px;background:#fcc06f;"></div>
<div class="a" style="left:8px;top:425px;width:25px;height:1px;background:#ffd896;"></div>
<div class="a" style="left:33px;top:425px;width:1px;height:20px;background:#000080;"></div>
<div class="a" style="left:8px;top:444px;width:26px;height:1px;background:#000080;"></div>
<div class="t" style="left:8px;top:429px;width:25px;text-align:center;font:12px 'Liberation Sans', sans-serif;color:#000">12</div>
<div class="a" style="left:8px;top:445px;width:25px;height:39px;background:#ece9d8;"></div>
<div class="a" style="left:8px;top:445px;width:25px;height:1px;background:#fff8e8;"></div>
<div class="a" style="left:33px;top:445px;width:1px;height:40px;background:#7a7865;"></div>
<div class="a" style="left:8px;top:484px;width:26px;height:1px;background:#7a7865;"></div>
<div class="t" style="left:8px;top:469px;width:25px;text-align:center;font:12px 'Liberation Sans', sans-serif;color:#000">13</div>
<div class="a" style="left:8px;top:485px;width:25px;height:39px;background:#ece9d8;"></div>
<div class="a" style="left:8px;top:485px;width:25px;height:1px;background:#fff8e8;"></div>
<div class="a" style="left:33px;top:485px;width:1px;height:40px;background:#7a7865;"></div>
<div class="a" style="left:8px;top:524px;width:26px;height:1px;background:#7a7865;"></div>
<div class="t" style="left:8px;top:509px;width:25px;text-align:center;font:12px 'Liberation Sans', sans-serif;color:#000">14</div>
<div class="a" style="left:8px;top:525px;width:25px;height:39px;background:#ece9d8;"></div>
<div class="a" style="left:8px;top:525px;width:25px;height:1px;background:#fff8e8;"></div>
<div class="a" style="left:33px;top:525px;width:1px;height:40px;background:#7a7865;"></div>
<div class="a" style="left:8px;top:564px;width:26px;height:1px;background:#7a7865;"></div>
<div class="t" style="left:8px;top:549px;width:25px;text-align:center;font:12px 'Liberation Sans', sans-serif;color:#000">15</div>
<div class="a" style="left:8px;top:565px;width:25px;height:39px;background:#ece9d8;"></div>
<div class="a" style="left:8px;top:565px;width:25px;height:1px;background:#fff8e8;"></div>
<div class="a" style="left:33px;top:565px;width:1px;height:40px;background:#7a7865;"></div>
<div class="a" style="left:8px;top:604px;width:26px;height:1px;background:#7a7865;"></div>
<div class="t" style="left:8px;top:589px;width:25px;text-align:center;font:12px 'Liberation Sans', sans-serif;color:#000">16</div>
<div class="a" style="left:8px;top:605px;width:25px;height:8px;background:#ece9d8;"></div>
<div class="a" style="left:8px;top:605px;width:25px;height:1px;background:#fff8e8;"></div>
<div class="a" style="left:33px;top:605px;width:1px;height:9px;background:#7a7865;"></div>
<div class="t" style="left:8px;top:606px;width:25px;text-align:center;font:12px 'Liberation Sans', sans-serif;color:#000">17</div>
<div class="a" style="left:229px;top:141px;width:1px;height:472px;background:#c0c0c0;"></div>
<div class="a" style="left:322px;top:141px;width:1px;height:472px;background:#c0c0c0;"></div>
<div class="a" style="left:418px;top:141px;width:1px;height:472px;background:#c0c0c0;"></div>
<div class="a" style="left:517px;top:141px;width:1px;height:472px;background:#c0c0c0;"></div>
<div class="a" style="left:616px;top:141px;width:1px;height:472px;background:#c0c0c0;"></div>
<div class="a" style="left:715px;top:141px;width:1px;height:472px;background:#c0c0c0;"></div>
<div class="a" style="left:814px;top:141px;width:1px;height:472px;background:#c0c0c0;"></div>
<div class="a" style="left:34px;top:157px;width:788px;height:1px;background:#c0c0c0;"></div>
<div class="a" style="left:34px;top:174px;width:788px;height:1px;background:#c0c0c0;"></div>
<div class="a" style="left:34px;top:191px;width:788px;height:1px;background:#c0c0c0;"></div>
<div class="a" style="left:34px;top:208px;width:788px;height:1px;background:#c0c0c0;"></div>
<div class="a" style="left:34px;top:226px;width:788px;height:1px;background:#c0c0c0;"></div>
<div class="a" style="left:34px;top:245px;width:788px;height:1px;background:#c0c0c0;"></div>
<div class="a" style="left:34px;top:264px;width:788px;height:1px;background:#c0c0c0;"></div>
<div class="a" style="left:34px;top:304px;width:788px;height:1px;background:#c0c0c0;"></div>
<div class="a" style="left:34px;top:344px;width:788px;height:1px;background:#c0c0c0;"></div>
<div class="a" style="left:34px;top:384px;width:788px;height:1px;background:#c0c0c0;"></div>
<div class="a" style="left:34px;top:424px;width:788px;height:1px;background:#c0c0c0;"></div>
<div class="a" style="left:34px;top:444px;width:788px;height:1px;background:#c0c0c0;"></div>
<div class="a" style="left:34px;top:484px;width:788px;height:1px;background:#c0c0c0;"></div>
<div class="a" style="left:34px;top:524px;width:788px;height:1px;background:#c0c0c0;"></div>
<div class="a" style="left:34px;top:564px;width:788px;height:1px;background:#c0c0c0;"></div>
<div class="a" style="left:34px;top:604px;width:788px;height:1px;background:#c0c0c0;"></div>
<div class="a" style="left:36px;top:229px;width:578px;height:213px;background:#b6caea;"></div>
<div class="a" style="left:35px;top:228px;width:580px;height:1px;background:#fff;"></div>
<div class="a" style="left:35px;top:442px;width:580px;height:1px;background:#fff;"></div>
<div class="a" style="left:35px;top:228px;width:1px;height:215px;background:#fff;"></div>
<div class="a" style="left:614px;top:228px;width:1px;height:215px;background:#fff;"></div>
<div class="a" style="left:230px;top:245px;width:384px;height:1px;background:#cbc3b9;"></div>
<div class="a" style="left:35px;top:228px;width:193px;height:35px;background:#fff;"></div>
<div class="a" style="left:618px;top:225px;width:197px;height:2px;background:#000;"></div>
<div class="a" style="left:617px;top:227px;width:1px;height:38px;background:#000;"></div>
<div class="a" style="left:714px;top:225px;width:2px;height:40px;background:#000;"></div>
<div class="a" style="left:813px;top:225px;width:2px;height:40px;background:#000;"></div>
<div class="a" style="left:34px;top:263px;width:195px;height:2px;background:#000;"></div>
<div class="a" style="left:229px;top:263px;width:386px;height:2px;background:#0a1e46;"></div>
<div class="a" style="left:617px;top:263px;width:198px;height:2px;background:#000;"></div>
<div class="a" style="left:228px;top:228px;width:1px;height:37px;background:#000;"></div>
<div class="a" style="left:229px;top:228px;width:1px;height:37px;background:#0a1e46;"></div>
<div class="a" style="left:321px;top:228px;width:2px;height:37px;background:#0a1e46;"></div>
<div class="a" style="left:417px;top:228px;width:2px;height:37px;background:#0a1e46;"></div>
<div class="a" style="left:516px;top:228px;width:2px;height:37px;background:#0a1e46;"></div>
<div class="a" style="left:34px;top:227px;width:581px;height:1px;background:#000;"></div>
<div class="a" style="left:34px;top:227px;width:1px;height:218px;background:#000;"></div>
<div class="a" style="left:35px;top:304px;width:579px;height:1px;background:#0a1e46;"></div>
<div class="a" style="left:617px;top:304px;width:198px;height:1px;background:#000;"></div>
<div class="a" style="left:35px;top:344px;width:579px;height:1px;background:#0a1e46;"></div>
<div class="a" style="left:617px;top:344px;width:198px;height:1px;background:#000;"></div>
<div class="a" style="left:35px;top:384px;width:579px;height:1px;background:#0a1e46;"></div>
<div class="a" style="left:617px;top:384px;width:198px;height:1px;background:#000;"></div>
<div class="a" style="left:35px;top:424px;width:579px;height:1px;background:#0a1e46;"></div>
<div class="a" style="left:617px;top:424px;width:198px;height:1px;background:#000;"></div>
<div class="a" style="left:34px;top:484px;width:781px;height:1px;background:#000;"></div>
<div class="a" style="left:34px;top:524px;width:781px;height:1px;background:#000;"></div>
<div class="a" style="left:34px;top:564px;width:781px;height:1px;background:#000;"></div>
<div class="a" style="left:34px;top:604px;width:781px;height:1px;background:#000;"></div>
<div class="a" style="left:34px;top:443px;width:584px;height:1px;background:#000;"></div>
<div class="a" style="left:34px;top:445px;width:584px;height:1px;background:#000;"></div>
<div class="a" style="left:618px;top:444px;width:197px;height:1px;background:#000;"></div>
<div class="a" style="left:229px;top:265px;width:1px;height:178px;background:#0a1e46;"></div>
<div class="a" style="left:229px;top:446px;width:1px;height:159px;background:#000;"></div>
<div class="a" style="left:322px;top:265px;width:1px;height:178px;background:#0a1e46;"></div>
<div class="a" style="left:322px;top:446px;width:1px;height:159px;background:#000;"></div>
<div class="a" style="left:418px;top:265px;width:1px;height:178px;background:#0a1e46;"></div>
<div class="a" style="left:418px;top:446px;width:1px;height:159px;background:#000;"></div>
<div class="a" style="left:517px;top:265px;width:1px;height:178px;background:#0a1e46;"></div>
<div class="a" style="left:517px;top:446px;width:1px;height:159px;background:#000;"></div>
<div class="a" style="left:615px;top:227px;width:1px;height:218px;background:#000;"></div>
<div class="a" style="left:617px;top:227px;width:1px;height:218px;background:#000;"></div>
<div class="a" style="left:615px;top:227px;width:2px;height:38px;background:#fff;"></div>
<div class="a" style="left:616px;top:446px;width:1px;height:159px;background:#000;"></div>
<div class="a" style="left:715px;top:265px;width:1px;height:340px;background:#000;"></div>
<div class="a" style="left:814px;top:265px;width:1px;height:340px;background:#000;"></div>
<div class="a" style="left:614px;top:442px;width:2px;height:2px;background:#000;"></div>
<div class="a" style="left:617px;top:442px;width:2px;height:2px;background:#000;"></div>
<div class="a" style="left:614px;top:445px;width:2px;height:2px;background:#000;"></div>
<div class="a" style="left:617px;top:445px;width:2px;height:2px;background:#000;"></div>
<div class="a" style="left:616px;top:441px;width:1px;height:7px;background:#fff;"></div>
<div class="a" style="left:613px;top:444px;width:7px;height:1px;background:#fff;"></div>
<div class="t" style="left:34px;top:228.71px;width:195px;text-align:center;font:bold 14.67px 'Liberation Serif', serif;color:#000;letter-spacing:0.45px"><span class="bl">Наименование</span></div>
<div class="t" style="left:34px;top:246.71px;width:195px;text-align:center;font:bold 14.67px 'Liberation Serif', serif;color:#000;letter-spacing:0.8px"><span class="bl">показателей</span></div>
<div class="t" style="left:229px;top:228.71px;width:93px;text-align:center;font:bold 14.67px 'Liberation Serif', serif;color:#000;"><span class="bl">Ед.</span></div>
<div class="t" style="left:229px;top:246.71px;width:93px;text-align:center;font:bold 14.67px 'Liberation Serif', serif;color:#000;letter-spacing:0.5px"><span class="bl">изм.</span></div>
<div class="t" style="left:322px;top:228.71px;width:96px;text-align:center;font:bold 14.67px 'Liberation Serif', serif;color:#000;letter-spacing:0.4px"><span class="bl">2007</span></div>
<div class="t" style="left:322px;top:246.71px;width:96px;text-align:center;font:bold 14.67px 'Liberation Serif', serif;color:#000;letter-spacing:1.5px;text-indent:1.5px"><span class="bl">год</span></div>
<div class="t" style="left:418px;top:228.71px;width:99px;text-align:center;font:bold 14.67px 'Liberation Serif', serif;color:#000;letter-spacing:0.4px"><span class="bl">2008</span></div>
<div class="t" style="left:418px;top:246.71px;width:99px;text-align:center;font:bold 14.67px 'Liberation Serif', serif;color:#000;letter-spacing:1.5px;text-indent:1.5px"><span class="bl">год</span></div>
<div class="t" style="left:517px;top:228.71px;width:99px;text-align:center;font:bold 14.67px 'Liberation Serif', serif;color:#000;letter-spacing:0.4px"><span class="bl">2009</span></div>
<div class="t" style="left:517px;top:246.71px;width:99px;text-align:center;font:bold 14.67px 'Liberation Serif', serif;color:#000;letter-spacing:1.5px;text-indent:1.5px"><span class="bl">год</span></div>
<div class="t" style="left:616px;top:228.71px;width:99px;text-align:center;font:bold 14.67px 'Liberation Serif', serif;color:#000;letter-spacing:0.4px"><span class="bl">2010</span></div>
<div class="t" style="left:616px;top:246.71px;width:99px;text-align:center;font:bold 14.67px 'Liberation Serif', serif;color:#000;letter-spacing:1.5px;text-indent:1.5px"><span class="bl">год</span></div>
<div class="t" style="left:715px;top:228.71px;width:99px;text-align:center;font:bold 14.67px 'Liberation Serif', serif;color:#000;letter-spacing:0.4px"><span class="bl">2011</span></div>
<div class="t" style="left:715px;top:246.71px;width:99px;text-align:center;font:bold 14.67px 'Liberation Serif', serif;color:#000;letter-spacing:1.5px;text-indent:1.5px"><span class="bl">год</span></div>
<div class="t" style="left:34px;top:266.71px;font:14.67px 'Liberation Serif', serif;color:#000;"><span class="bl">11.</span></div>
<div class="t" style="left:28px;top:266.71px;width:200px;text-align:right;font:14.67px 'Liberation Serif', serif;color:#000;"><span class="bl">Себестоимость</span></div>
<div class="t" style="left:35px;top:286.71px;font:14.67px 'Liberation Serif', serif;color:#000;letter-spacing:-0.13px"><span class="bl">реализованной продукции</span></div>
<div class="t" style="left:229px;top:266.71px;width:93px;text-align:center;font:14.67px 'Liberation Serif', serif;color:#000;letter-spacing:-0.25px"><span class="bl">Млн. руб.</span></div>
<div class="t" style="left:322px;top:266.71px;width:96px;text-align:center;font:14.67px 'Liberation Serif', serif;color:#000;letter-spacing:-0.6px"><span class="bl">20576</span></div>
<div class="t" style="left:418px;top:266.71px;width:99px;text-align:center;font:14.67px 'Liberation Serif', serif;color:#000;letter-spacing:-0.6px"><span class="bl">31844</span></div>
<div class="t" style="left:517px;top:266.71px;width:99px;text-align:center;font:14.67px 'Liberation Serif', serif;color:#000;letter-spacing:-0.6px"><span class="bl">28086</span></div>
<div class="t" style="left:616px;top:266.71px;width:99px;text-align:center;font:14.67px 'Liberation Serif', serif;color:#000;letter-spacing:-0.6px"><span class="bl">35945</span></div>
<div class="t" style="left:715px;top:266.71px;width:99px;text-align:center;font:14.67px 'Liberation Serif', serif;color:#000;letter-spacing:-0.6px"><span class="bl">39602</span></div>
<div class="t" style="left:34px;top:306.71px;width:194px;text-align:justify;text-align-last:justify;font:14.67px 'Liberation Serif', serif;color:#000;white-space:normal;">12. Себестоимость товарной</div>
<div class="t" style="left:35px;top:326.71px;font:14.67px 'Liberation Serif', serif;color:#000;"><span class="bl">продукции</span></div>
<div class="t" style="left:229px;top:306.71px;width:93px;text-align:center;font:14.67px 'Liberation Serif', serif;color:#000;letter-spacing:-0.25px"><span class="bl">Млн. руб.</span></div>
<div class="t" style="left:322px;top:306.71px;width:96px;text-align:center;font:14.67px 'Liberation Serif', serif;color:#000;letter-spacing:-0.6px"><span class="bl">21066</span></div>
<div class="t" style="left:418px;top:306.71px;width:99px;text-align:center;font:14.67px 'Liberation Serif', serif;color:#000;letter-spacing:-0.6px"><span class="bl">31387</span></div>
<div class="t" style="left:517px;top:306.71px;width:99px;text-align:center;font:14.67px 'Liberation Serif', serif;color:#000;letter-spacing:-0.6px"><span class="bl">28906</span></div>
<div class="t" style="left:616px;top:306.71px;width:99px;text-align:center;font:14.67px 'Liberation Serif', serif;color:#000;letter-spacing:-0.6px"><span class="bl">33966</span></div>
<div class="t" style="left:715px;top:306.71px;width:99px;text-align:center;font:14.67px 'Liberation Serif', serif;color:#000;letter-spacing:-0.6px"><span class="bl">40119</span></div>
<div class="t" style="left:34px;top:346.71px;width:194px;text-align:justify;text-align-last:justify;font:14.67px 'Liberation Serif', serif;color:#000;white-space:normal;">13. Прибыль от реализации</div>
<div class="t" style="left:35px;top:366.71px;font:14.67px 'Liberation Serif', serif;color:#000;"><span class="bl">продукции</span></div>
<div class="t" style="left:229px;top:346.71px;width:93px;text-align:center;font:14.67px 'Liberation Serif', serif;color:#000;letter-spacing:-0.25px"><span class="bl">Млн. руб.</span></div>
<div class="t" style="left:322px;top:346.71px;width:96px;text-align:center;font:14.67px 'Liberation Serif', serif;color:#000;letter-spacing:-0.6px"><span class="bl">5212</span></div>
<div class="t" style="left:418px;top:346.71px;width:99px;text-align:center;font:14.67px 'Liberation Serif', serif;color:#000;letter-spacing:-0.6px"><span class="bl">5814</span></div>
<div class="t" style="left:517px;top:346.71px;width:99px;text-align:center;font:14.67px 'Liberation Serif', serif;color:#000;letter-spacing:-0.6px"><span class="bl">4647</span></div>
<div class="t" style="left:616px;top:346.71px;width:99px;text-align:center;font:14.67px 'Liberation Serif', serif;color:#000;letter-spacing:-0.6px"><span class="bl">6138</span></div>
<div class="t" style="left:715px;top:346.71px;width:99px;text-align:center;font:14.67px 'Liberation Serif', serif;color:#000;letter-spacing:-0.6px"><span class="bl">6859</span></div>
<div class="t" style="left:35px;top:386.71px;font:14.67px 'Liberation Serif', serif;color:#000;letter-spacing:0.25px"><span class="bl">Рентабельность</span></div>
<div class="t" style="left:35px;top:406.71px;font:14.67px 'Liberation Serif', serif;color:#000;letter-spacing:-0.13px"><span class="bl">реализованной продукции</span></div>
<div class="t" style="left:229px;top:386.71px;width:93px;text-align:center;font:14.67px 'Liberation Serif', serif;color:#000;letter-spacing:-0.25px"><span class="bl">%</span></div>
<div class="t" style="left:322px;top:407.15px;width:96px;text-align:center;font:14px 'Liberation Sans', sans-serif;color:#000;letter-spacing:-0.3px"><span class="bl">25,33</span></div>
<div class="t" style="left:418px;top:407.15px;width:99px;text-align:center;font:14px 'Liberation Sans', sans-serif;color:#000;letter-spacing:-0.3px"><span class="bl">18,26</span></div>
<div class="t" style="left:517px;top:407.15px;width:99px;text-align:center;font:14px 'Liberation Sans', sans-serif;color:#000;letter-spacing:-0.3px"><span class="bl">16,55</span></div>
<div class="t" style="left:616px;top:407.15px;width:99px;text-align:center;font:14px 'Liberation Sans', sans-serif;color:#000;letter-spacing:-0.3px"><span class="bl">17,08</span></div>
<div class="t" style="left:715px;top:407.15px;width:99px;text-align:center;font:14px 'Liberation Sans', sans-serif;color:#000;letter-spacing:-0.3px"><span class="bl">17,32</span></div>
<div class="t" style="left:34px;top:426.71px;font:14.67px 'Liberation Serif', serif;color:#000;"><span class="bl">14. Темп роста цепной</span></div>
<div class="t" style="left:34px;top:446.71px;font:14.67px 'Liberation Serif', serif;color:#000;"><span class="bl">14.1</span></div>
<div class="t" style="left:28px;top:446.71px;width:200px;text-align:right;font:14.67px 'Liberation Serif', serif;color:#000;"><span class="bl">Себестоимости</span></div>
<div class="t" style="left:35px;top:466.71px;font:14.67px 'Liberation Serif', serif;color:#000;letter-spacing:-0.13px"><span class="bl">реализованной продукции</span></div>
<div class="t" style="left:229px;top:446.71px;width:93px;text-align:center;font:14.67px 'Liberation Serif', serif;color:#000;"><span class="bl">%</span></div>
<div class="t" style="left:315px;top:467.15px;width:200px;text-align:right;font:14px 'Liberation Sans', sans-serif;color:#000;letter-spacing:-0.3px"><span class="bl">154,76</span></div>
<div class="t" style="left:414px;top:467.15px;width:200px;text-align:right;font:14px 'Liberation Sans', sans-serif;color:#000;letter-spacing:-0.3px"><span class="bl">88,20</span></div>
<div class="t" style="left:513px;top:467.15px;width:200px;text-align:right;font:14px 'Liberation Sans', sans-serif;color:#000;letter-spacing:-0.3px"><span class="bl">127,98</span></div>
<div class="t" style="left:612px;top:467.15px;width:200px;text-align:right;font:14px 'Liberation Sans', sans-serif;color:#000;letter-spacing:-0.3px"><span class="bl">110,17</span></div>
<div class="t" style="left:34px;top:486.71px;width:194px;text-align:justify;text-align-last:justify;font:14.67px 'Liberation Serif', serif;color:#000;white-space:normal;">14.2 Себестоимости товарной</div>
<div class="t" style="left:35px;top:506.71px;font:14.67px 'Liberation Serif', serif;color:#000;"><span class="bl">продукции</span></div>
<div class="t" style="left:229px;top:486.71px;width:93px;text-align:center;font:14.67px 'Liberation Serif', serif;color:#000;"><span class="bl">%</span></div>
<div class="t" style="left:315px;top:507.15px;width:200px;text-align:right;font:14px 'Liberation Sans', sans-serif;color:#000;letter-spacing:-0.3px"><span class="bl">148,99</span></div>
<div class="t" style="left:414px;top:507.15px;width:200px;text-align:right;font:14px 'Liberation Sans', sans-serif;color:#000;letter-spacing:-0.3px"><span class="bl">92,10</span></div>
<div class="t" style="left:513px;top:507.15px;width:200px;text-align:right;font:14px 'Liberation Sans', sans-serif;color:#000;letter-spacing:-0.3px"><span class="bl">117,51</span></div>
<div class="t" style="left:612px;top:507.15px;width:200px;text-align:right;font:14px 'Liberation Sans', sans-serif;color:#000;letter-spacing:-0.3px"><span class="bl">118,12</span></div>
<div class="t" style="left:34px;top:526.71px;width:194px;text-align:justify;text-align-last:justify;font:14.67px 'Liberation Serif', serif;color:#000;white-space:normal;">14.3 Прибыли от реализации</div>
<div class="t" style="left:35px;top:546.71px;font:14.67px 'Liberation Serif', serif;color:#000;"><span class="bl">продукции</span></div>
<div class="t" style="left:229px;top:526.71px;width:93px;text-align:center;font:14.67px 'Liberation Serif', serif;color:#000;"><span class="bl">%</span></div>
<div class="t" style="left:315px;top:547.15px;width:200px;text-align:right;font:14px 'Liberation Sans', sans-serif;color:#000;letter-spacing:-0.3px"><span class="bl">111,55</span></div>
<div class="t" style="left:414px;top:547.15px;width:200px;text-align:right;font:14px 'Liberation Sans', sans-serif;color:#000;letter-spacing:-0.3px"><span class="bl">79,93</span></div>
<div class="t" style="left:513px;top:547.15px;width:200px;text-align:right;font:14px 'Liberation Sans', sans-serif;color:#000;letter-spacing:-0.3px"><span class="bl">132,09</span></div>
<div class="t" style="left:612px;top:547.15px;width:200px;text-align:right;font:14px 'Liberation Sans', sans-serif;color:#000;letter-spacing:-0.3px"><span class="bl">111,75</span></div>
<div class="t" style="left:34px;top:566.71px;font:14.67px 'Liberation Serif', serif;color:#000;"><span class="bl">14.4</span></div>
<div class="t" style="left:28px;top:566.71px;width:200px;text-align:right;font:14.67px 'Liberation Serif', serif;color:#000;"><span class="bl">Рентабельности</span></div>
<div class="t" style="left:35px;top:586.71px;font:14.67px 'Liberation Serif', serif;color:#000;letter-spacing:-0.13px"><span class="bl">реализованной продукции</span></div>
<div class="t" style="left:229px;top:566.71px;width:93px;text-align:center;font:14.67px 'Liberation Serif', serif;color:#000;"><span class="bl">%</span></div>
<div class="t" style="left:315px;top:587.15px;width:200px;text-align:right;font:14px 'Liberation Sans', sans-serif;color:#000;letter-spacing:-0.3px"><span class="bl">72,08</span></div>
<div class="t" style="left:414px;top:587.15px;width:200px;text-align:right;font:14px 'Liberation Sans', sans-serif;color:#000;letter-spacing:-0.3px"><span class="bl">90,62</span></div>
<div class="t" style="left:513px;top:587.15px;width:200px;text-align:right;font:14px 'Liberation Sans', sans-serif;color:#000;letter-spacing:-0.3px"><span class="bl">103,21</span></div>
<div class="t" style="left:612px;top:587.15px;width:200px;text-align:right;font:14px 'Liberation Sans', sans-serif;color:#000;letter-spacing:-0.3px"><span class="bl">101,43</span></div>
</body></html>
